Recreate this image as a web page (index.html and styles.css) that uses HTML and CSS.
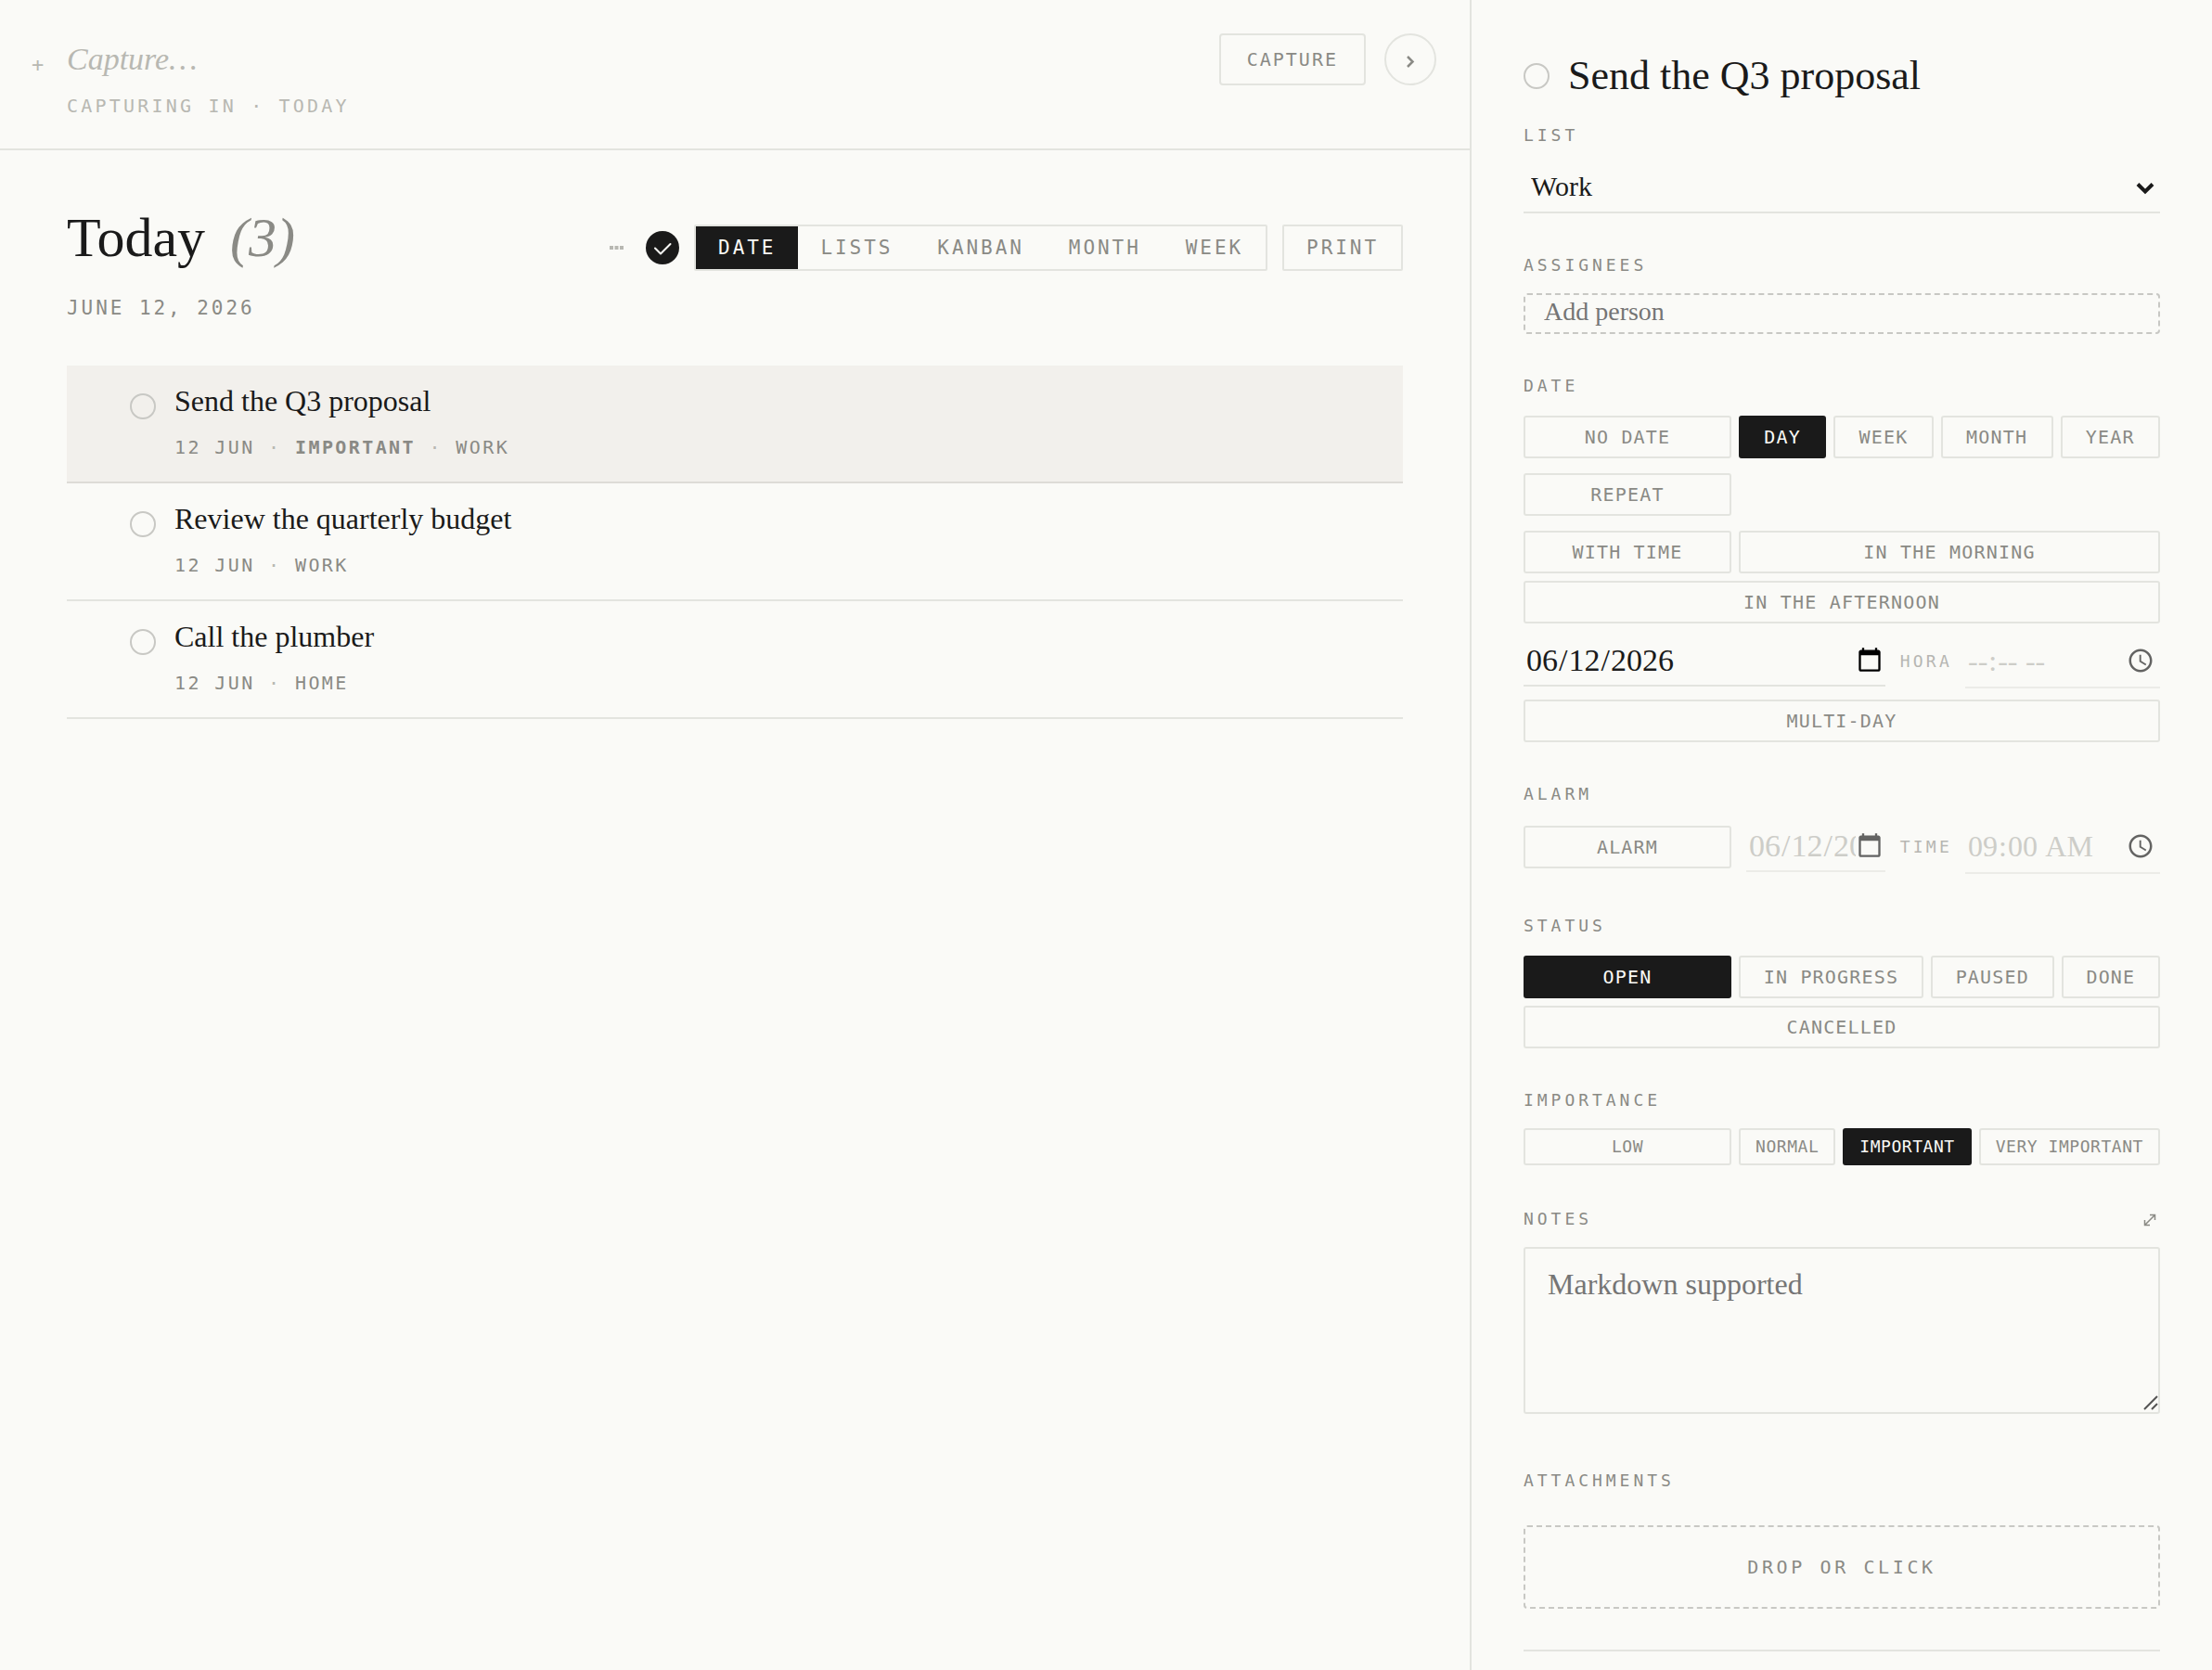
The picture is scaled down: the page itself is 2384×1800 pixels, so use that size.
FILE: index.html
```html
<!DOCTYPE html>
<html lang="en-US">
<head>
<meta charset="utf-8">
<meta name="viewport" content="width=device-width, initial-scale=1">
<title>Today</title>
<link rel="stylesheet" href="styles.css">
</head>
<body>
<div class="app">
  <main class="main">
    <form class="capture">
      <span class="capture-plus" aria-hidden="true">+</span>
      <div class="capture-field">
        <input class="capture-input" type="text" placeholder="Capture…" aria-label="Capture">
        <p class="capture-hint">CAPTURING IN · TODAY</p>
      </div>
      <div class="capture-actions">
        <button class="capture-button" type="button">CAPTURE</button>
        <button class="round-button" type="button" aria-label="Close panel">
          <svg width="10" height="20" viewBox="0 0 10 20" fill="none" stroke="currentColor" stroke-width="2.500"><path d="M2 7l5.500 5.500L2 18"/></svg>
        </button>
      </div>
    </form>

    <section class="day">
      <header class="day-header">
        <div class="day-heading">
          <h1 class="day-title">Today <em class="day-count">(3)</em></h1>
          <p class="day-date">JUNE 12, 2026</p>
        </div>
        <div class="toolbar">
          <button class="more" type="button" aria-label="More">
            <svg width="16" height="6" viewBox="0 0 16 6" fill="currentColor"><path d="M1 1h4v4H1zM6.500 1h4v4h-4zM12 1h4v4h-4z"/></svg>
          </button>
          <button class="show-done" type="button" aria-label="Show done">
            <svg width="20" height="20" viewBox="0 0 20 20" fill="none" stroke="currentColor" stroke-width="2" stroke-linecap="round" stroke-linejoin="round"><path d="M2 10.500 8 16.500 18.500 6"/></svg>
          </button>
          <div class="views">
            <button class="view view-active" type="button">DATE</button>
            <button class="view" type="button">LISTS</button>
            <button class="view" type="button">KANBAN</button>
            <button class="view" type="button">MONTH</button>
            <button class="view" type="button">WEEK</button>
          </div>
          <button class="view print" type="button">PRINT</button>
        </div>
      </header>

      <ul class="tasks">
        <li class="task task-selected">
          <input class="check" type="checkbox" id="task-1">
          <div class="task-body">
            <label class="task-title" for="task-1">Send the Q3 proposal</label>
            <p class="task-meta">12 JUN <span class="dot">·</span> <strong>IMPORTANT</strong> <span class="dot">·</span> WORK</p>
          </div>
        </li>
        <li class="task">
          <input class="check" type="checkbox" id="task-2">
          <div class="task-body">
            <label class="task-title" for="task-2">Review the quarterly budget</label>
            <p class="task-meta">12 JUN <span class="dot">·</span> WORK</p>
          </div>
        </li>
        <li class="task">
          <input class="check" type="checkbox" id="task-3">
          <div class="task-body">
            <label class="task-title" for="task-3">Call the plumber</label>
            <p class="task-meta">12 JUN <span class="dot">·</span> HOME</p>
          </div>
        </li>
      </ul>
    </section>
  </main>

  <aside class="detail">
    <div class="detail-header">
      <input class="check" type="checkbox" id="detail-done">
      <label class="detail-title" for="detail-done">Send the Q3 proposal</label>
    </div>

    <section class="field field-list">
      <label class="label" for="list">LIST</label>
      <div class="select-wrap">
        <select class="select" id="list"><option>Work</option></select>
        <svg class="select-arrow" width="20" height="14" viewBox="0 0 20 14" fill="none" stroke="currentColor" stroke-width="4"><path d="M2 2.500l8 8 8-8"/></svg>
      </div>
    </section>

    <section class="field">
      <label class="label" for="assignees">ASSIGNEES</label>
      <input class="person" id="assignees" type="text" placeholder="Add person">
    </section>

    <section class="field">
      <h2 class="label">DATE</h2>
      <div class="stack">
        <div class="chips">
          <button class="chip chip-first" type="button">NO DATE</button>
          <button class="chip chip-active" type="button">DAY</button>
          <button class="chip" type="button">WEEK</button>
          <button class="chip" type="button">MONTH</button>
          <button class="chip" type="button">YEAR</button>
        </div>
        <div class="chips">
          <button class="chip chip-first" type="button">REPEAT</button>
        </div>
        <div class="chips">
          <button class="chip chip-first" type="button">WITH TIME</button>
          <button class="chip" type="button">IN THE MORNING</button>
          <button class="chip" type="button">IN THE AFTERNOON</button>
        </div>
      </div>
      <div class="when">
        <input class="date-input" type="date" value="2026-06-12" aria-label="Date">
        <label class="label label-off" for="hour">HORA</label>
        <input class="time-input input-off" id="hour" type="time">
      </div>
      <div class="chips">
        <button class="chip" type="button">MULTI-DAY</button>
      </div>
    </section>

    <section class="field">
      <h2 class="label">ALARM</h2>
      <div class="when when-alarm">
        <button class="chip chip-first" type="button">ALARM</button>
        <input class="date-input input-off" type="date" value="2026-06-12" aria-label="Alarm date">
        <label class="label label-off" for="alarm-time">TIME</label>
        <input class="time-input input-off" id="alarm-time" type="time" value="09:00">
      </div>
    </section>

    <section class="field">
      <h2 class="label">STATUS</h2>
      <div class="stack">
        <div class="chips">
          <button class="chip chip-first chip-active" type="button">OPEN</button>
          <button class="chip" type="button">IN PROGRESS</button>
          <button class="chip" type="button">PAUSED</button>
          <button class="chip" type="button">DONE</button>
          <button class="chip" type="button">CANCELLED</button>
        </div>
      </div>
    </section>

    <section class="field">
      <h2 class="label">IMPORTANCE</h2>
      <div class="chips chips-small">
        <button class="chip chip-first" type="button">LOW</button>
        <button class="chip" type="button">NORMAL</button>
        <button class="chip chip-active" type="button">IMPORTANT</button>
        <button class="chip" type="button">VERY IMPORTANT</button>
      </div>
    </section>

    <section class="field">
      <div class="label-row">
        <label class="label" for="notes">NOTES</label>
        <button class="expand" type="button" aria-label="Expand notes">
          <svg width="14" height="14" viewBox="0 0 14 14" fill="none" stroke="currentColor" stroke-width="1.500"><path d="M2 12 12 2M7 1.500h5.500V7M1.500 7v5.500H7"/></svg>
        </button>
      </div>
      <div class="notes-wrap">
        <textarea class="notes" id="notes" placeholder="Markdown supported"></textarea>
        <svg class="grip" width="16" height="16" viewBox="0 0 16 16" fill="none" stroke="currentColor" stroke-width="2"><path d="M1 15 15 1M9 15l6-6"/></svg>
      </div>
    </section>

    <section class="field field-files">
      <h2 class="label">ATTACHMENTS</h2>
      <button class="drop" type="button">DROP OR CLICK</button>
    </section>
  </aside>
</div>
</body>
</html>
```
FILE: styles.css
```css
:root {
  --paper: #fafaf7;
  --ink: #1a1a1a;
  --muted: #8a8a85;
  --faint: #b8b8b2;
  --rule: #e3e4df;
  --dash: #c8c8c4;
  --serif: "Liberation Serif", "Times New Roman", serif;
  --mono: "DejaVu Sans Mono", "Liberation Mono", monospace;
}

* { box-sizing: border-box; }

body {
  margin: 0;
  background: var(--paper);
  color: var(--ink);
  font-family: var(--serif);
}

h1, h2, p, ul { margin: 0; padding: 0; font-weight: 400; }

button, input, select, textarea {
  margin: 0;
  color: inherit;
  background: transparent;
  border: 0;
  border-radius: 0;
  outline: 0;
  font-family: inherit;
}

button { padding: 0; }

.app { display: flex; min-height: 100vh; }
.main { flex: 1; min-width: 0; }

/* Capture bar */
.capture {
  display: flex;
  align-items: flex-start;
  padding: 36px 36px 32px 34px;
  border-bottom: 2px solid var(--rule);
}
.capture-plus {
  width: 38px;
  padding-top: 20px;
  font: 22px/28px var(--mono);
  color: var(--faint);
}
.capture-field { flex: 1; }
.capture-input {
  display: block;
  width: 100%;
  height: 56px;
  padding: 0;
  font-size: 34px;
  font-style: italic;
}
.capture-input::placeholder { color: var(--faint); }
.capture-hint {
  padding-top: 8px;
  font: 20px/28px var(--mono);
  letter-spacing: 0.16em;
  color: var(--faint);
}
.capture-actions { display: flex; gap: 20px; }
.capture-button {
  height: 56px;
  padding: 0 28px;
  border: 2px solid var(--rule);
  border-radius: 4px;
  font: 20px/24px var(--mono);
  letter-spacing: 0.1em;
  color: var(--muted);
}
.round-button {
  display: grid;
  place-items: center;
  width: 56px;
  height: 56px;
  border: 2px solid var(--rule);
  border-radius: 50%;
  color: var(--muted);
}

/* Day list */
.day { padding: 56px 72px; }
.day-header {
  display: flex;
  justify-content: space-between;
  align-items: flex-start;
}
.day-title { font-size: 60px; line-height: 76px; }
.day-count { padding-left: 12px; color: var(--muted); }
.day-date {
  padding-top: 24px;
  font: 21px/28px var(--mono);
  letter-spacing: 0.14em;
  color: var(--muted);
}
.toolbar { display: flex; align-items: center; padding-top: 24px; }
.more { display: flex; margin-right: 24px; color: var(--faint); }
.show-done {
  display: grid;
  place-items: center;
  width: 36px;
  height: 36px;
  margin-right: 16px;
  border-radius: 50%;
  background: var(--ink);
  color: var(--paper);
}
.views {
  display: flex;
  margin-right: 16px;
  border: 2px solid var(--rule);
  border-radius: 2px;
}
.view {
  height: 46px;
  padding: 0 24px;
  font: 21px/28px var(--mono);
  letter-spacing: 0.14em;
  color: var(--muted);
}
.view-active { background: var(--ink); color: var(--paper); }
.print { height: 50px; border: 2px solid var(--rule); border-radius: 2px; }

.tasks { padding-top: 48px; list-style: none; }
.task {
  display: flex;
  gap: 20px;
  padding: 18px 68px 22px;
  border-bottom: 2px solid var(--rule);
}
.task-selected { background: #f2f0ec; border-color: #dddbd7; }
.check {
  flex: none;
  appearance: none;
  width: 28px;
  height: 28px;
  margin-top: 12px;
  border: 2px solid var(--dash);
  border-radius: 50%;
}
.task-title { display: block; font-size: 32px; line-height: 40px; }
.task-meta {
  padding-top: 16px;
  font: 20px/29px var(--mono);
  letter-spacing: 0.12em;
  color: var(--muted);
}
.dot { color: var(--faint); }

/* Detail panel */
.detail {
  width: 800px;
  padding: 54px 56px 20px;
  border-left: 2px solid var(--rule);
}
.detail-header { display: flex; gap: 20px; }
.detail-header .check { margin-top: 14px; }
.detail-title { font-size: 44px; line-height: 56px; }

.field { padding-top: 44px; }
.field-list { padding-top: 24px; }
.label {
  display: block;
  padding-bottom: 18px;
  font: 18px/24px var(--mono);
  letter-spacing: 0.22em;
  color: var(--muted);
}
.label-row { display: flex; justify-content: space-between; padding-top: 2px; }
.expand { display: flex; height: 24px; padding: 6px 4px 4px; color: var(--muted); }

.select-wrap { display: grid; align-items: center; }
.select, .select-arrow { grid-area: 1 / 1; }
.select {
  appearance: none;
  width: 100%;
  height: 54px;
  padding: 0 8px 4px;
  border-bottom: 2px solid var(--rule);
  font-size: 30px;
}
.select-arrow { justify-self: end; margin-right: 6px; pointer-events: none; }

.person {
  display: block;
  width: 100%;
  height: 44px;
  padding: 0 20px 4px;
  border: 2px dashed var(--dash);
  border-radius: 4px;
  font-size: 28px;
}
.person::placeholder, .notes::placeholder { color: #757575; }

.stack { display: grid; gap: 16px; padding-top: 2px; }
.chips { display: flex; flex-wrap: wrap; gap: 8px; }
.chip {
  flex: 1 1 auto;
  height: 46px;
  padding: 0 24px;
  border: 2px solid var(--rule);
  border-radius: 3px;
  font: 20px/24px var(--mono);
  letter-spacing: 0.06em;
  white-space: nowrap;
  color: var(--muted);
}
.chip-first { flex: 0 0 224px; }
.chip-active { background: var(--ink); border-color: var(--ink); color: var(--paper); }
.chips-small .chip {
  height: 40px;
  padding: 0 16px;
  font-size: 18px;
  letter-spacing: 0.03em;
}

.when { display: flex; align-items: center; padding: 12px 0; }
.when-alarm { margin-top: -2px; padding: 0; }
.when .label { padding: 0 14px 0 16px; letter-spacing: 0.18em; }
.label-off { opacity: 0.6; }
.date-input, .time-input {
  min-width: 0;
  padding: 0 2px;
  border-bottom: 2px solid var(--rule);
  font-size: 32px;
}
.date-input { flex: 1 1 0; height: 54px; font-size: 34px; }
.time-input { width: 210px; height: 58px; }
.when .chip + .date-input { margin-left: 16px; }
.input-off { opacity: 0.6; color: #b0b0aa; }
.date-input::-webkit-calendar-picker-indicator,
.time-input::-webkit-calendar-picker-indicator {
  width: 30px;
  height: 30px;
  margin-left: 0;
  padding: 0;
}
.time-input::-webkit-calendar-picker-indicator { margin-right: 4px; }

.notes-wrap { position: relative; }
.notes {
  display: block;
  width: 100%;
  height: 180px;
  padding: 16px 24px;
  border: 2px solid var(--rule);
  border-radius: 3px;
  font-size: 32px;
  line-height: 44px;
  resize: none;
}
.grip { position: absolute; right: 2px; bottom: 4px; color: #555; }

.field-files {
  padding: 60px 0 44px;
  border-bottom: 2px solid var(--rule);
}
.field-files .label { padding-bottom: 36px; }
.drop {
  display: block;
  width: 100%;
  height: 90px;
  border: 2px dashed var(--dash);
  border-radius: 4px;
  font: 20px/24px var(--mono);
  letter-spacing: 0.18em;
  color: var(--muted);
}
```
